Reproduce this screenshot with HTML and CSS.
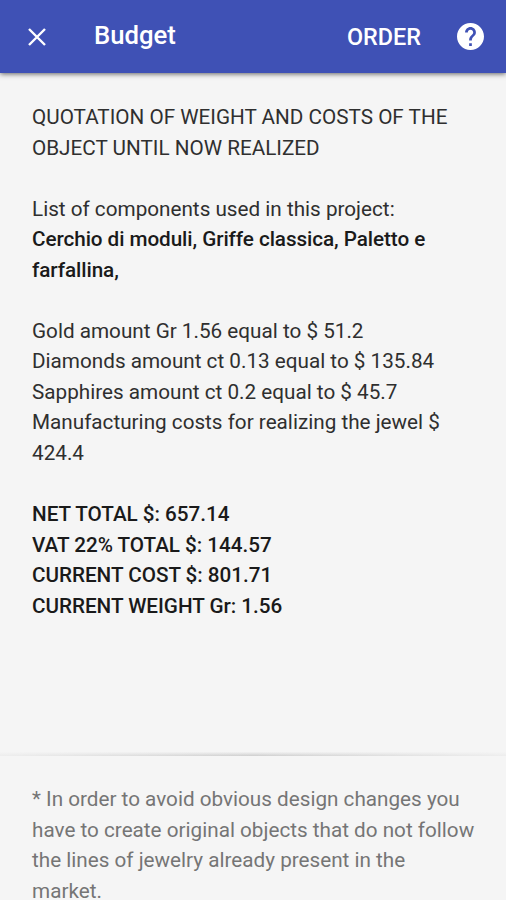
FILE: index.html
```html
<!DOCTYPE html>
<html lang="en">

<head>
  <meta charset="UTF-8">
  <meta name="viewport" content="width=device-width, initial-scale=1.0">
  <title>Budget</title>
  <link rel="stylesheet" href="styles.css">
</head>

<body>
  <div class="screen">
    <header class="toolbar">
      <svg class="close" viewBox="0 0 18 18">
        <path d="M1 1L17 17M17 1L1 17" />
      </svg>
      <h1 class="title">Budget</h1>
      <div class="order">ORDER</div>
      <svg class="help" viewBox="2 2 20 20">
        <path d="M12 2C6.48 2 2 6.48 2 12s4.48 10 10 10 10-4.48 10-10S17.52 2 12 2zm1 17h-2v-2h2v2zm2.07-7.75l-.9.92C13.45 12.9 13 13.5 13 15h-2v-.5c0-1.1.45-2.1 1.17-2.83l1.24-1.26c.37-.36.59-.86.59-1.41 0-1.1-.9-2-2-2s-2 .9-2 2H8c0-2.21 1.79-4 4-4s4 1.79 4 4c0 .88-.36 1.68-.93 2.25z" />
      </svg>
    </header>

    <main class="quotation">
      <p>QUOTATION OF WEIGHT AND COSTS OF THE<br>
        OBJECT UNTIL NOW REALIZED</p>
      <p>List of components used in this project:<br>
        <b>Cerchio di moduli, Griffe classica, Paletto e<br>farfallina,</b></p>
      <p>Gold amount Gr 1.56 equal to $ 51.2<br>
        Diamonds amount ct 0.13 equal to $ 135.84<br>
        Sapphires amount ct 0.2 equal to $ 45.7<br>
        Manufacturing costs for realizing the jewel $<br>424.4</p>
      <p class="totals">NET TOTAL $: 657.14<br>
        VAT 22% TOTAL $: 144.57<br>
        CURRENT COST $: 801.71<br>
        CURRENT WEIGHT Gr: 1.56</p>
    </main>

    <div class="divider"></div>

    <footer class="note">
      * In order to avoid obvious design changes you<br>
      have to create original objects that do not follow<br>
      the lines of jewelry already present in the<br>
      market.
    </footer>
  </div>
</body>

</html>
```
FILE: styles.css
```css
* {
  box-sizing: border-box;
  margin: 0;
  padding: 0;
}

body {
  background: #f5f5f5;
  color: #2f2f2f;
  font-family: Roboto, sans-serif;
  font-size: 20.7px;
  line-height: 30.55px;
}

.screen {
  display: flex;
  flex-direction: column;
  height: 900px;
}

.toolbar {
  display: flex;
  flex: none;
  align-items: center;
  height: 73px;
  padding: 0 22px 0 28px;
  background: #3f51b5;
  color: #fff;
  box-shadow: 0 1px 5px rgba(0, 0, 0, .6);
}

.close {
  width: 18px;
  height: 18px;
  fill: none;
  stroke: #fff;
  stroke-width: 2.4;
}

.title {
  margin-left: 48px;
  padding-bottom: 2px;
  font-size: 25.7px;
  font-weight: 500;
}

.order {
  margin-left: auto;
  padding-top: 2px;
  font-size: 23.4px;
  font-weight: 500;
}

.help {
  width: 27px;
  height: 27px;
  margin-left: 36px;
  fill: #fff;
}

.quotation {
  flex: none;
  height: 679px;
  padding: 29px 0 0 32px;
  white-space: nowrap;
}

.quotation p {
  margin-bottom: 30.55px;
}

.quotation b,
.quotation .totals {
  color: #1a1a1a;
  font-weight: 500;
}

.quotation b {
  letter-spacing: -.07px;
}

.quotation .totals {
  letter-spacing: -.03px;
}

/* shadow line, fades out to both sides */
.divider {
  flex: none;
  height: 4px;
  background:
    linear-gradient(to right, rgba(245, 245, 245, .8), rgba(245, 245, 245, 0) 50%, rgba(245, 245, 245, .8)),
    linear-gradient(#f2f2f2, #cecece);
}

.note {
  flex: none;
  padding: 28px 0 0 32px;
  color: #757575;
  white-space: nowrap;
}
```
